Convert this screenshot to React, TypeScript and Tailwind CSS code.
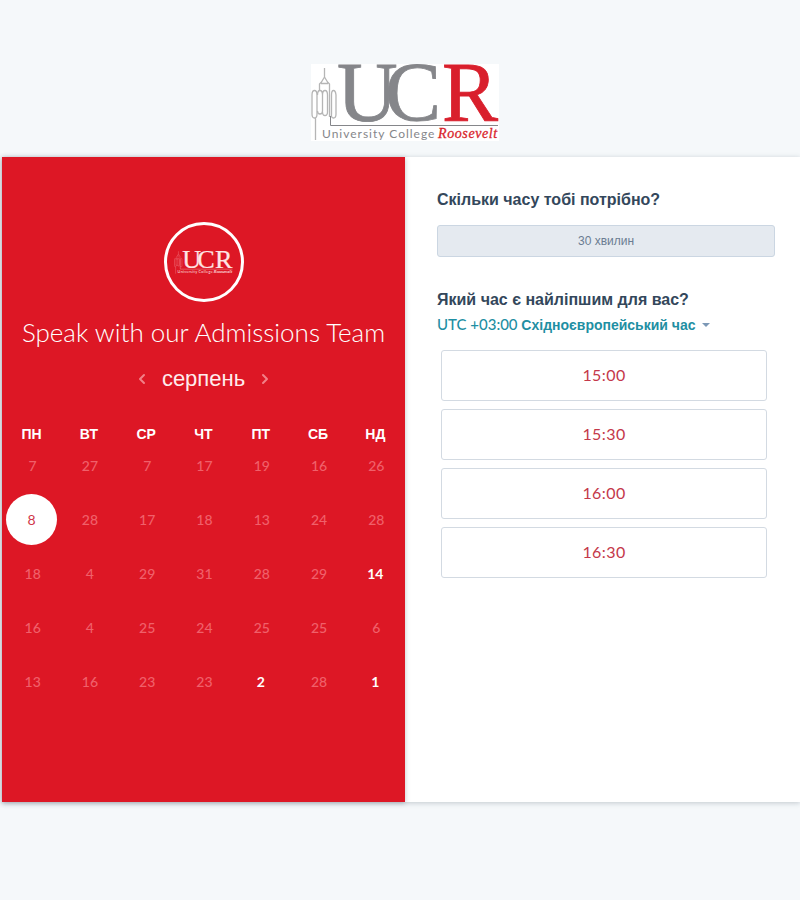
import React from 'react';
import { ChevronLeft, ChevronRight } from 'lucide-react';

const weekdays = ['ПН', 'ВТ', 'СР', 'ЧТ', 'ПТ', 'СБ', 'НД'];

type Day = { label: number; state?: 'open' | 'selected' };

const weeks: Day[][] = [
  [{ label: 7 }, { label: 27 }, { label: 7 }, { label: 17 }, { label: 19 }, { label: 16 }, { label: 26 }],
  [{ label: 8, state: 'selected' }, { label: 28 }, { label: 17 }, { label: 18 }, { label: 13 }, { label: 24 }, { label: 28 }],
  [{ label: 18 }, { label: 4 }, { label: 29 }, { label: 31 }, { label: 28 }, { label: 29 }, { label: 14, state: 'open' }],
  [{ label: 16 }, { label: 4 }, { label: 25 }, { label: 24 }, { label: 25 }, { label: 25 }, { label: 6 }],
  [{ label: 13 }, { label: 16 }, { label: 23 }, { label: 23 }, { label: 2, state: 'open' }, { label: 28 }, { label: 1, state: 'open' }],
];

const slots = ['15:00', '15:30', '16:00', '16:30'];

function LogoArt({ ink, accent, line }: { ink: string; accent: string; line: string }) {
  return (
    <>
      <g fill="none" stroke={line} strokeWidth="1.3" strokeLinejoin="round">
        <path d="M13.500 4V13L10.500 18L8.500 20V27M13.500 13L16.500 18L18.500 20V27M10 19.500H17" />
        <path d="M4.500 76V54M1 31Q1 26.500 3.500 26.500T6 31V50Q6 54 3.500 54T1 50Z" />
        <path d="M6.500 31Q6.500 26.500 9 26.500T11.500 31V47Q11.500 50 9 50T6.500 47M11.500 31Q11.500 26.500 14 26.500T16.500 31V48Q16.500 51.500 14 51.500T11.500 48" />
        <path d="M18.500 27V53M20.500 31Q20.500 26.500 22.500 26.500T25 31V50Q25 54 22.500 54T20.500 50Z" />
        <path d="M19.500 52V61.500H187" stroke={ink} strokeWidth="1" />
      </g>
      <text y="57" fontFamily="'Liberation Serif', serif" fontSize="84" strokeWidth="0.8">
        <tspan x="26" fill={ink} stroke={ink}>U</tspan>
        <tspan x="74" fill={ink} stroke={ink}>C</tspan>
        <tspan x="131" fill={accent} stroke={accent}>R</tspan>
      </text>
      <text y="74">
        <tspan x="11" fill={ink} fontFamily="Lato, sans-serif" fontSize="12" letterSpacing="1">University College</tspan>
        <tspan x="127" fill={accent} stroke={accent} strokeWidth="0.3" fontFamily="'Liberation Serif', serif" fontSize="14" fontStyle="italic" letterSpacing="0.6">Roosevelt</tspan>
      </text>
    </>
  );
}

function DayCell({ day }: { day: Day }) {
  if (day.state === 'selected') {
    return (
      <button type="button" aria-pressed="true" className="size-[51px] rounded-full bg-white text-sm text-[#d0384a]">
        {day.label}
      </button>
    );
  }
  if (day.state === 'open') {
    return <button type="button" className="size-[51px] rounded-full text-sm font-bold text-white">{day.label}</button>;
  }
  return <button type="button" disabled className="size-[51px] rounded-full pl-0.5 text-sm font-medium text-[#f0606a]">{day.label}</button>;
}

export default function App() {
  return (
    <div className="min-h-screen bg-[#f5f8fa] pt-16 pb-24 font-[Lato,'Liberation_Sans',sans-serif]">
      <header className="flex justify-center pl-2.5">
        <svg viewBox="0 0 188 77" className="h-[77px] w-[188px] overflow-visible bg-white" role="img" aria-label="University College Roosevelt">
          <LogoArt ink="#85868a" accent="#d91f2c" line="#b5b5b5" />
        </svg>
      </header>

      <main className="mt-4 ml-0.5 grid min-h-[645px] grid-cols-[403fr_395fr] bg-white shadow-[0_1px_5px_rgba(45,62,80,0.25)]">
        <section className="bg-[#dd1725] px-px pt-[65px] text-white shadow-[0_1px_5px_rgba(45,62,80,0.3)]">
          <div className="mx-auto flex size-20 items-center justify-center rounded-full border-3 border-white">
            <svg viewBox="0 0 188 77" className="h-6 w-[59px] overflow-visible" role="img" aria-label="UCR">
              <LogoArt ink="#ffe4e4" accent="#ffe4e4" line="#f28088" />
            </svg>
          </div>
          <h1 className="mt-3.5 text-center text-[26px] leading-8 font-light">Speak with our Admissions Team</h1>

          <div className="mt-[13px] flex h-9 items-center justify-center gap-3 text-[#f28088]">
            <button type="button" aria-label="Попередній місяць"><ChevronLeft size={16} strokeWidth={3} /></button>
            <h2 className="font-['Liberation_Sans',sans-serif] text-[22px] leading-7 text-[#ffecec]">серпень</h2>
            <button type="button" aria-label="Наступний місяць"><ChevronRight size={16} strokeWidth={3} /></button>
          </div>

          <table className="mt-[31px] w-full table-fixed border-collapse">
            <thead>
              <tr className="h-3">
                {weekdays.map((name) => (
                  <th key={name} scope="col" className="p-0 font-['Liberation_Sans',sans-serif] text-sm leading-3 font-bold">{name}</th>
                ))}
              </tr>
            </thead>
            <tbody>
              {weeks.map((week, row) => (
                <tr key={row} className="h-[54px]">
                  {week.map((day, column) => (
                    <td key={column} className="p-0 text-center align-top leading-none"><DayCell day={day} /></td>
                  ))}
                </tr>
              ))}
            </tbody>
          </table>
        </section>

        <section className="pt-[33px] pr-[25px] pl-8">
          <h2 className="font-['Liberation_Sans',sans-serif] text-base leading-5 font-bold text-[#33475b]">Скільки часу тобі потрібно?</h2>
          <button type="button" className="mt-[15px] block h-8 w-full rounded-[3px] border border-[#cbd6e2] bg-[#e5eaf0] font-['Liberation_Sans',sans-serif] text-xs text-[#6b7d92]">
            30 хвилин
          </button>

          <h2 className="mt-[33px] font-['Liberation_Sans',sans-serif] text-base leading-5 font-bold text-[#33475b]">Який час є найліпшим для вас?</h2>
          <button type="button" className="mt-[5px] flex h-5 items-center text-sm text-[#1f8fa3]">
            <span className="text-[15px] font-medium whitespace-pre">UTC +03:00 </span>
            <span className="font-['Liberation_Sans',sans-serif] font-bold">Східноєвропейський час</span>
            <svg viewBox="0 0 8 4" className="ml-1.5 h-1 w-2 fill-[#7c98b6]" aria-hidden="true"><path d="M0 0h8L4 4z" /></svg>
          </button>

          <ul className="mt-[15px] flex flex-col gap-2 pr-2 pl-1">
            {slots.map((time) => (
              <li key={time}>
                <button type="button" className="block h-[51px] w-full rounded-[3px] border border-[#d3dae2] pb-0.5 text-base tracking-wide text-[#c4384a]">{time}</button>
              </li>
            ))}
          </ul>
        </section>
      </main>
    </div>
  );
}
